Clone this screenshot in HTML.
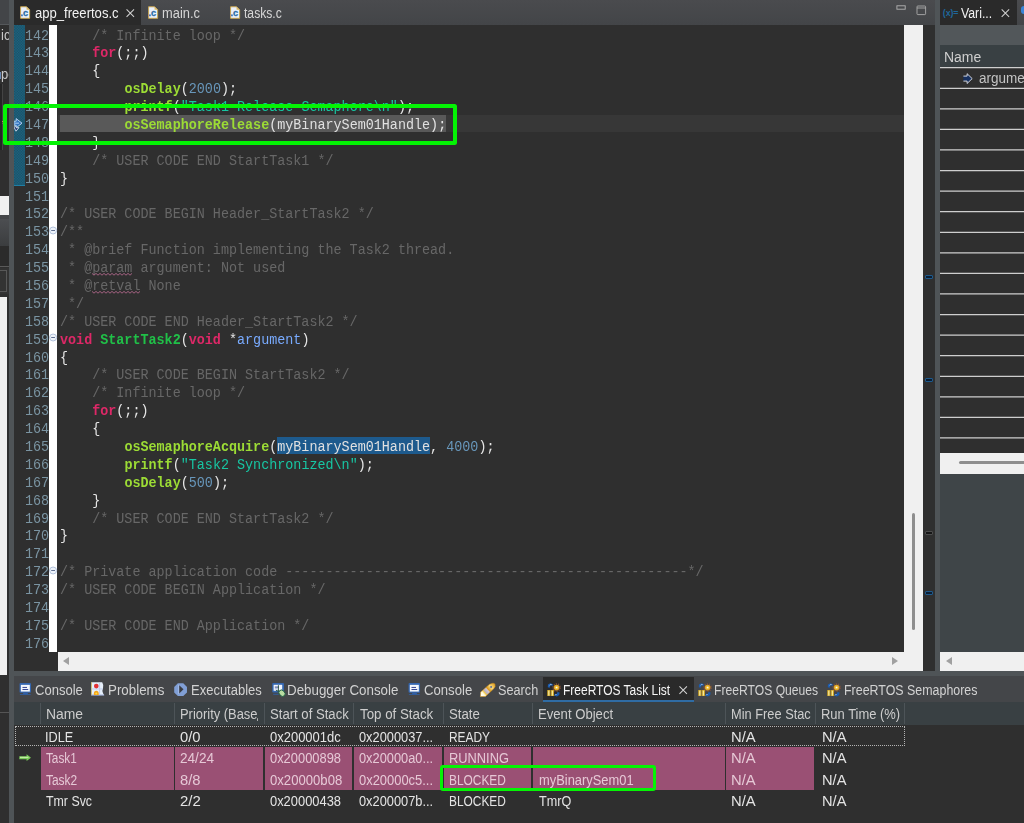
<!DOCTYPE html>
<html><head><meta charset="utf-8"><title>IDE</title>
<style>
html,body{margin:0;padding:0;}
html{width:1024px;height:823px;overflow:hidden;background:#2f2f2f;}
body{width:1024px;height:823px;overflow:hidden;background:#2f2f2f;position:relative;font-family:"Liberation Sans",sans-serif;}
.a{position:absolute;}
svg{position:absolute;overflow:visible;}
/* ---------- editor ---------- */
#edtabs{left:14px;top:0;width:921px;height:24.5px;background:linear-gradient(#4a4b4e,#434548);}
#tabact{left:14px;top:0;width:126.5px;height:24.5px;background:#2a2a2a;}
.u{position:absolute;font-size:14px;line-height:16px;height:16px;white-space:pre;transform-origin:0 0;}
.ln,.no{position:absolute;white-space:pre;font-family:"Liberation Mono",monospace;font-size:13.41px;line-height:17.888px;height:17.888px;transform:scaleY(1.1);transform-origin:0 12.5px;}
.ln{left:60px;color:#d8d8d8;}
.no{left:25px;color:#7a94a2;}
.c{color:#676767;}
.k{color:#dd2867;font-weight:bold;}
.f{color:#9cdc35;font-weight:bold;}
.d{color:#20c048;font-weight:bold;}
.n{color:#6897bb;}
.s{color:#17c6a3;}
.p{color:#79abff;}
.b{color:#e6e6e6;}
.t{color:#e0e0e0;}


/* ---------- scrollbars ---------- */
#vsb{left:904px;top:24.8px;width:19px;height:646px;background:#f0f0f0;}
#hsb{left:58px;top:651.6px;width:865px;height:19px;background:#f0f0f0;}
#ruler{left:923px;top:24.5px;width:11.6px;height:646px;background:#2f2f2f;}
.sash{background:#4f5457;}
.mark{left:924.8px;width:8.2px;height:4.4px;background:#0b1e33;border:1px solid #1f5a8c;box-sizing:border-box;border-radius:1px;}
/* ---------- right panel ---------- */
#rp{left:940px;top:0;width:84px;height:670.5px;background:#2f2f2f;}
#rptabs{left:940px;top:0;width:84px;height:24.5px;background:linear-gradient(#4a4b4e,#434548);}
#rptab{left:940px;top:0;width:76.6px;height:24.5px;background:#2a2a2a;}
#rptool{left:940px;top:24.5px;width:84px;height:20.5px;background:#52575a;}
#rphead{left:940px;top:45px;width:84px;height:22px;background:#394043;}
.rl{left:940px;width:84px;height:1.2px;background:#c4c4c4;}
/* ---------- bottom panel ---------- */
#bp{left:14px;top:676px;width:1010px;height:147px;background:#2f2f2f;}
#bptabs{left:14px;top:676px;width:1010px;height:25.6px;background:#444649;}
#bphead{left:14px;top:701.6px;width:1010px;height:23.2px;background:#394043;}
.vs{top:702.5px;width:1px;height:21.5px;background:#4d5458;}
.pink{background:#9a5074;}
.gbox{border:4px solid #04f404;box-sizing:border-box;border-radius:2.5px;}
.u,.ln,.no{filter:blur(0.3px);}
</style></head><body>
<!-- editor tab bar -->
<div class="a" id="edtabs"></div>
<div class="a" id="tabact"></div>
<svg style="left:20.4px;top:5.9px" width="10.6" height="12.9" viewBox="0 0 11 13"><path d="M0.6 0.6H6.8L10 3.8V12.6H0.6Z" fill="#eaf1fb" stroke="#c9a44e" stroke-width="1"/><path d="M6.8 0.6V3.8H10Z" fill="#dcb964"/><text x="0.4" y="10.6" font-family="Liberation Sans" font-weight="bold" font-size="9.6" fill="#2d6ca6" stroke="#2d6ca6" stroke-width="0.3">.c</text></svg>
<svg style="left:147.6px;top:5.9px" width="10.6" height="12.9" viewBox="0 0 11 13"><path d="M0.6 0.6H6.8L10 3.8V12.6H0.6Z" fill="#eaf1fb" stroke="#c9a44e" stroke-width="1"/><path d="M6.8 0.6V3.8H10Z" fill="#dcb964"/><text x="0.4" y="10.6" font-family="Liberation Sans" font-weight="bold" font-size="9.6" fill="#2d6ca6" stroke="#2d6ca6" stroke-width="0.3">.c</text></svg>
<svg style="left:229.8px;top:5.9px" width="10.6" height="12.9" viewBox="0 0 11 13"><path d="M0.6 0.6H6.8L10 3.8V12.6H0.6Z" fill="#eaf1fb" stroke="#c9a44e" stroke-width="1"/><path d="M6.8 0.6V3.8H10Z" fill="#dcb964"/><text x="0.4" y="10.6" font-family="Liberation Sans" font-weight="bold" font-size="9.6" fill="#2d6ca6" stroke="#2d6ca6" stroke-width="0.3">.c</text></svg>
<svg style="left:125.6px;top:8.6px" width="8.6" height="8.4" viewBox="0 0 9 9"><path d="M0.5 0.5L8.5 8.5M8.5 0.5L0.5 8.5" stroke="#d2d2d2" stroke-width="1.1" fill="none"/></svg>
<!-- min / max -->
<svg style="left:895.5px;top:4.5px" width="10" height="5" viewBox="0 0 10 5"><rect x="0.9" y="0.8" width="8.3" height="3.4" fill="none" stroke="#b4b4b4" stroke-width="0.9"/></svg>
<svg style="left:916px;top:4.5px" width="11" height="11" viewBox="0 0 11 11"><rect x="1" y="1" width="8.6" height="8.6" rx="0.8" fill="none" stroke="#acacac" stroke-width="0.9"/><path d="M1 3H9.6" stroke="#acacac" stroke-width="0.9"/></svg>
<!-- editor -->
<div class="a" id="curline" style="left:58px;top:114.5px;width:846px;height:17.5px;background:#373737"></div>
<div class="a" id="dbgline" style="left:60px;top:114.5px;width:386px;height:17.5px;background:#595959"></div>
<div class="a" id="teal" style="left:14px;top:24.8px;width:11.1px;height:160.6px;background:#1c5a73;background-image:conic-gradient(#1d4c62 25%,#1b6985 0 50%,#1d4c62 0 75%,#1b6985 0);background-size:1.6px 1.6px"></div>
<div class="a" style="left:14px;top:185px;width:11.1px;height:1px;background:#1f7ea4"></div>
<div class="a" id="white1" style="left:48.9px;top:24.8px;width:8.2px;height:627px;background:#ffffff"></div>
<div class="a" style="left:277.3px;top:437px;width:152.8px;height:17.4px;background:#1d5a8d"></div>
<!-- fold markers -->
<svg style="left:48.9px;top:226px" width="8.2" height="9" viewBox="0 0 8.2 9"><circle cx="4.1" cy="4.5" r="3.5" fill="#eef3fa" stroke="#b2c2dc" stroke-width="1"/><path d="M2.2 4.5H6" stroke="#5f6f92" stroke-width="1"/></svg>
<svg style="left:48.9px;top:333.3px" width="8.2" height="9" viewBox="0 0 8.2 9"><circle cx="4.1" cy="4.5" r="3.5" fill="#eef3fa" stroke="#b2c2dc" stroke-width="1"/><path d="M2.2 4.5H6" stroke="#5f6f92" stroke-width="1"/></svg>
<svg style="left:48.9px;top:565.9px" width="8.2" height="9" viewBox="0 0 8.2 9"><circle cx="4.1" cy="4.5" r="3.5" fill="#eef3fa" stroke="#b2c2dc" stroke-width="1"/><path d="M2.2 4.5H6" stroke="#5f6f92" stroke-width="1"/></svg>
<!-- debug arrow -->
<svg style="left:14px;top:117.5px" width="9" height="14" viewBox="0 0 9 14"><path d="M0 3.2H2.2V0.6L8 5.2L2.2 9.8V7.2H0Z" fill="#2f72bd" stroke="#b4d0ee" stroke-width="1"/><path d="M0 9.2L2 13.2L5 9.6L2.4 9.8L1.6 8.2Z" fill="#1b3570" stroke="#e8eef8" stroke-width="0.8"/><path d="M0.4 5.2H5" stroke="#8fb8e6" stroke-width="1.4"/></svg>
<div class="no" style="top:27.60px">142</div>
<div class="no" style="top:45.49px">143</div>
<div class="no" style="top:63.38px">144</div>
<div class="no" style="top:81.26px">145</div>
<div class="no" style="top:99.15px">146</div>
<div class="no" style="top:117.04px">147</div>
<div class="no" style="top:134.93px">148</div>
<div class="no" style="top:152.82px">149</div>
<div class="no" style="top:170.70px">150</div>
<div class="no" style="top:188.59px">151</div>
<div class="no" style="top:206.48px">152</div>
<div class="no" style="top:224.37px">153</div>
<div class="no" style="top:242.26px">154</div>
<div class="no" style="top:260.14px">155</div>
<div class="no" style="top:278.03px">156</div>
<div class="no" style="top:295.92px">157</div>
<div class="no" style="top:313.81px">158</div>
<div class="no" style="top:331.70px">159</div>
<div class="no" style="top:349.58px">160</div>
<div class="no" style="top:367.47px">161</div>
<div class="no" style="top:385.36px">162</div>
<div class="no" style="top:403.25px">163</div>
<div class="no" style="top:421.14px">164</div>
<div class="no" style="top:439.02px">165</div>
<div class="no" style="top:456.91px">166</div>
<div class="no" style="top:474.80px">167</div>
<div class="no" style="top:492.69px">168</div>
<div class="no" style="top:510.58px">169</div>
<div class="no" style="top:528.46px">170</div>
<div class="no" style="top:546.35px">171</div>
<div class="no" style="top:564.24px">172</div>
<div class="no" style="top:582.13px">173</div>
<div class="no" style="top:600.02px">174</div>
<div class="no" style="top:617.90px">175</div>
<div class="no" style="top:635.79px">176</div>
<div class="ln" style="top:27.60px">    <span class="c">/* Infinite loop */</span></div>
<div class="ln" style="top:45.49px">    <span class="k">for</span><span class="b">(;;)</span></div>
<div class="ln" style="top:63.38px">    <span class="b">{</span></div>
<div class="ln" style="top:81.26px">        <span class="f">osDelay</span><span class="b">(</span><span class="n">2000</span><span class="b">);</span></div>
<div class="ln" style="top:99.15px">        <span class="f">printf</span><span class="b">(</span><span class="s">&quot;Task1 Release Semaphore\n&quot;</span><span class="b">);</span></div>
<div class="ln" style="top:117.04px">        <span class="f">osSemaphoreRelease</span><span class="b">(</span><span class="t">myBinarySem01Handle</span><span class="b">);</span></div>
<div class="ln" style="top:134.93px">    <span class="b">}</span></div>
<div class="ln" style="top:152.82px">    <span class="c">/* USER CODE END StartTask1 */</span></div>
<div class="ln" style="top:170.70px"><span class="b">}</span></div>
<div class="ln" style="top:206.48px"><span class="c">/* USER CODE BEGIN Header_StartTask2 */</span></div>
<div class="ln" style="top:224.37px"><span class="c">/**</span></div>
<div class="ln" style="top:242.26px"><span class="c"> * @brief Function implementing the Task2 thread.</span></div>
<div class="ln" style="top:260.14px"><span class="c"> * @</span><span class="c sq">param</span><span class="c"> argument: Not used</span></div>
<div class="ln" style="top:278.03px"><span class="c"> * @</span><span class="c sq">retval</span><span class="c"> None</span></div>
<div class="ln" style="top:295.92px"><span class="c"> */</span></div>
<div class="ln" style="top:313.81px"><span class="c">/* USER CODE END Header_StartTask2 */</span></div>
<div class="ln" style="top:331.70px"><span class="k">void</span> <span class="d">StartTask2</span><span class="b">(</span><span class="k">void</span> <span class="b">*</span><span class="p">argument</span><span class="b">)</span></div>
<div class="ln" style="top:349.58px"><span class="b">{</span></div>
<div class="ln" style="top:367.47px">    <span class="c">/* USER CODE BEGIN StartTask2 */</span></div>
<div class="ln" style="top:385.36px">    <span class="c">/* Infinite loop */</span></div>
<div class="ln" style="top:403.25px">    <span class="k">for</span><span class="b">(;;)</span></div>
<div class="ln" style="top:421.14px">    <span class="b">{</span></div>
<div class="ln" style="top:439.02px">        <span class="f">osSemaphoreAcquire</span><span class="b">(</span><span class="t sel">myBinarySem01Handle</span><span class="b">, </span><span class="n">4000</span><span class="b">);</span></div>
<div class="ln" style="top:456.91px">        <span class="f">printf</span><span class="b">(</span><span class="s">&quot;Task2 Synchronized\n&quot;</span><span class="b">);</span></div>
<div class="ln" style="top:474.80px">        <span class="f">osDelay</span><span class="b">(</span><span class="n">500</span><span class="b">);</span></div>
<div class="ln" style="top:492.69px">    <span class="b">}</span></div>
<div class="ln" style="top:510.58px">    <span class="c">/* USER CODE END StartTask2 */</span></div>
<div class="ln" style="top:528.46px"><span class="b">}</span></div>
<div class="ln" style="top:564.24px"><span class="c">/* Private application code --------------------------------------------------*/</span></div>
<div class="ln" style="top:582.13px"><span class="c">/* USER CODE BEGIN Application */</span></div>
<div class="ln" style="top:617.90px"><span class="c">/* USER CODE END Application */</span></div>
<!-- squiggles -->
<svg style="left:92.1px;top:272.9px" width="40.2" height="2.6"><polyline points="0.0,0.4 2.0,2.2 4.0,0.4 6.0,2.2 8.0,0.4 10.0,2.2 12.0,0.4 14.0,2.2 16.0,0.4 18.0,2.2 20.0,0.4 22.0,2.2 24.0,0.4 26.0,2.2 28.0,0.4 30.0,2.2 32.0,0.4 34.0,2.2 36.0,0.4 38.0,2.2 40.0,0.4" fill="none" stroke="#b0668a" stroke-width="0.9"/></svg>
<svg style="left:92.1px;top:290.8px" width="48.2" height="2.6"><polyline points="0.0,0.4 2.0,2.2 4.0,0.4 6.0,2.2 8.0,0.4 10.0,2.2 12.0,0.4 14.0,2.2 16.0,0.4 18.0,2.2 20.0,0.4 22.0,2.2 24.0,0.4 26.0,2.2 28.0,0.4 30.0,2.2 32.0,0.4 34.0,2.2 36.0,0.4 38.0,2.2 40.0,0.4 42.0,2.2 44.0,0.4 46.0,2.2 48.0,0.4" fill="none" stroke="#b0668a" stroke-width="0.9"/></svg>
<!-- scrollbars / ruler -->
<div class="a" id="hsb"></div>
<div class="a" id="vsb"></div>
<div class="a" id="ruler"></div>
<div class="a mark" style="top:274.7px"></div>
<div class="a mark" style="top:377.5px"></div>
<div class="a mark" style="top:530.6px;background:#161616;border-color:#4c4c4c"></div>
<div class="a mark" style="top:590.6px"></div>
<div class="a" style="left:912.1px;top:512.5px;width:3px;height:117px;background:#8e8e8e;border-radius:1.5px"></div>
<div class="a" style="left:62.5px;top:656.6px;width:0;height:0;border:4.5px solid transparent;border-right:6.5px solid #a0a0a0;border-left:0"></div>
<div class="a" style="left:891.5px;top:656.6px;width:0;height:0;border:4.5px solid transparent;border-left:6.5px solid #a0a0a0;border-right:0"></div>
<!-- left strip -->
<div class="a" style="left:0;top:0;width:9px;height:823px;background:#2f2f2f;overflow:hidden">
<div class="a" style="left:0;top:0;width:9px;height:24px;background:#434548"></div>
<div class="a" style="left:0;top:24px;width:9px;height:1px;background:#55585b"></div>
<div class="u" style="left:0.6px;top:27.4px;color:#c8c8c8;transform:scaleX(.93)">ic</div>
<div class="u" style="left:1px;top:66.2px;color:#c8c8c8;transform:scaleX(.93)">pe</div><div class="a" style="left:0;top:72px;width:1px;height:7px;background:#6a8ab8"></div>
<div class="a" style="left:0;top:84px;width:1.6px;height:66px;background:#262626;border-right:1px solid #444"></div>
<div class="a" style="left:1.5px;top:120.5px;width:5px;height:1px;background:#b8935a"></div>
<div class="a" style="left:3.5px;top:116px;width:1px;height:8px;background:#8a7a5a;transform:skewX(-25deg)"></div>
<div class="a" style="left:0;top:195.7px;width:9px;height:19px;background:#f0f0f0"></div>
<div class="a" style="left:0;top:214.7px;width:9px;height:4px;background:#444648"></div>
<div class="a" style="left:0;top:218.6px;width:9px;height:27.2px;background:linear-gradient(#4c4e51,#3b3d3f)"></div>
<div class="a" style="left:0;top:245.8px;width:9px;height:20.5px;background:#2b2b2b"></div>
<div class="a" style="left:0;top:266.3px;width:9px;height:1.2px;background:#5a5a5a"></div>
<div class="a" style="left:0;top:267.5px;width:9px;height:26px;background:#333"></div>
<div class="a" style="left:-1px;top:270px;width:7.6px;height:22px;border:1px solid #585858;box-sizing:border-box"></div>
<div class="a" style="left:0;top:297.3px;width:7.4px;height:378px;background:#f0f0f0"></div>
<div class="a" style="left:0;top:712px;width:9px;height:1px;background:#555"></div>
</div>
<div class="a sash" style="left:9px;top:0;width:5px;height:823px"></div>
<div class="a sash" style="left:934.6px;top:0;width:5.4px;height:676px"></div>
<div class="a sash" style="left:14px;top:670.5px;width:1010px;height:5.5px"></div>
<!-- right panel -->
<div class="a" id="rp"></div>
<div class="a" id="rptabs"></div>
<div class="a" id="rptab"></div>
<div class="a" style="left:942.8px;top:7.8px;font:bold 8.8px 'Liberation Sans';color:#1f689c;letter-spacing:-0.1px;white-space:pre">(x)=</div>
<svg style="left:1001.2px;top:8.6px" width="8.8" height="8.4" viewBox="0 0 9 9"><path d="M0.5 0.5L8.5 8.5M8.5 0.5L0.5 8.5" stroke="#d2d2d2" stroke-width="1.1" fill="none"/></svg>
<div class="a" style="left:1020.5px;top:6px;width:3.5px;height:8px;border-radius:4px 0 0 4px;background:#3a84d8"></div>
<div class="a" id="rptool"></div>
<div class="a" id="rphead"></div>
<svg style="left:940px;top:0" width="84" height="460" viewBox="0 0 84 460">
<line x1="0" x2="84" y1="67.70" y2="67.70" stroke="#cfcfcf" stroke-width="1.25"/>
<line x1="0" x2="84" y1="88.27" y2="88.27" stroke="#cfcfcf" stroke-width="1.25"/>
<line x1="0" x2="84" y1="108.84" y2="108.84" stroke="#cfcfcf" stroke-width="1.25"/>
<line x1="0" x2="84" y1="129.41" y2="129.41" stroke="#cfcfcf" stroke-width="1.25"/>
<line x1="0" x2="84" y1="149.98" y2="149.98" stroke="#cfcfcf" stroke-width="1.25"/>
<line x1="0" x2="84" y1="170.55" y2="170.55" stroke="#cfcfcf" stroke-width="1.25"/>
<line x1="0" x2="84" y1="191.12" y2="191.12" stroke="#cfcfcf" stroke-width="1.25"/>
<line x1="0" x2="84" y1="211.69" y2="211.69" stroke="#cfcfcf" stroke-width="1.25"/>
<line x1="0" x2="84" y1="232.26" y2="232.26" stroke="#cfcfcf" stroke-width="1.25"/>
<line x1="0" x2="84" y1="252.83" y2="252.83" stroke="#cfcfcf" stroke-width="1.25"/>
<line x1="0" x2="84" y1="273.40" y2="273.40" stroke="#cfcfcf" stroke-width="1.25"/>
<line x1="0" x2="84" y1="293.97" y2="293.97" stroke="#cfcfcf" stroke-width="1.25"/>
<line x1="0" x2="84" y1="314.54" y2="314.54" stroke="#cfcfcf" stroke-width="1.25"/>
<line x1="0" x2="84" y1="335.11" y2="335.11" stroke="#cfcfcf" stroke-width="1.25"/>
<line x1="0" x2="84" y1="355.68" y2="355.68" stroke="#cfcfcf" stroke-width="1.25"/>
<line x1="0" x2="84" y1="376.25" y2="376.25" stroke="#cfcfcf" stroke-width="1.25"/>
<line x1="0" x2="84" y1="396.82" y2="396.82" stroke="#cfcfcf" stroke-width="1.25"/>
<line x1="0" x2="84" y1="417.39" y2="417.39" stroke="#cfcfcf" stroke-width="1.25"/>
<line x1="0" x2="84" y1="437.96" y2="437.96" stroke="#cfcfcf" stroke-width="1.25"/>
</svg>
<svg style="left:962.5px;top:72.5px" width="10" height="11.2" viewBox="0 0 10 11.2"><path d="M0.4 3.1H4.1V0.7L9.2 5.6L4.1 10.5V8.1H0.4Z" fill="#17305f"/><path d="M0.4 3.1H4.1V0.7L9.2 5.6L4.1 10.5V8.1H0.4" fill="none" stroke="#e4e8f0" stroke-width="0.9" stroke-linejoin="miter"/></svg>
<div class="a" style="left:940px;top:452.8px;width:84px;height:21px;background:#f0f0f0"></div>
<div class="a" style="left:958.6px;top:460.6px;width:65.4px;height:3px;background:#8e8e8e;border-radius:1.5px 0 0 1.5px"></div>
<div class="a" style="left:940px;top:473.8px;width:84px;height:178px;background:#3f4548"></div>
<div class="a" style="left:940px;top:651.6px;width:84px;height:19px;background:#f0f0f0"></div>
<div class="a" style="left:945.5px;top:656.6px;width:0;height:0;border:4.5px solid transparent;border-right:6.5px solid #a0a0a0;border-left:0"></div>
<!-- bottom panel -->
<div class="a" id="bp"></div>
<div class="a" id="bptabs"></div>
<div class="a" style="left:542.6px;top:677px;width:151.4px;height:24.6px;background:#2a2a2a"></div>
<div class="a" style="left:542.6px;top:699.7px;width:151.4px;height:2px;background:#2f6ca4"></div>
<div class="a" id="bphead"></div>
<div class="a vs" style="left:40px"></div><div class="a vs" style="left:173.8px"></div><div class="a vs" style="left:263.6px"></div><div class="a vs" style="left:352.8px"></div><div class="a vs" style="left:442.8px"></div><div class="a vs" style="left:532.2px"></div><div class="a vs" style="left:725.2px"></div><div class="a vs" style="left:814.6px"></div><div class="a vs" style="left:904.2px"></div>
<!-- bottom tab icons -->
<svg style="left:19.2px;top:683.1px" width="13" height="12.4" viewBox="0 0 12 12" preserveAspectRatio="none"><rect x="0.5" y="0" width="10.6" height="9.4" rx="1" fill="#3567b0"/><rect x="1.7" y="1.8" width="8.3" height="6.5" fill="#f4f8fd"/><rect x="3.2" y="3.8" width="4.2" height="1" fill="#3a4a94"/><rect x="3.2" y="5.8" width="5.3" height="1" fill="#3a4a94"/><rect x="3.8" y="9.4" width="4.4" height="1.6" fill="#2e60aa"/><rect x="0.8" y="10.7" width="10" height="0.9" fill="#2e60aa" opacity=".8"/></svg>
<svg style="left:408.1px;top:683.1px" width="13" height="12.4" viewBox="0 0 12 12" preserveAspectRatio="none"><rect x="0.5" y="0" width="10.6" height="9.4" rx="1" fill="#3567b0"/><rect x="1.7" y="1.8" width="8.3" height="6.5" fill="#f4f8fd"/><rect x="3.2" y="3.8" width="4.2" height="1" fill="#3a4a94"/><rect x="3.2" y="5.8" width="5.3" height="1" fill="#3a4a94"/><rect x="3.8" y="9.4" width="4.4" height="1.6" fill="#2e60aa"/><rect x="0.8" y="10.7" width="10" height="0.9" fill="#2e60aa" opacity=".8"/></svg>
<svg style="left:90.8px;top:682.3px" width="13.4" height="13.6" viewBox="0 0 13.4 13.6"><path d="M0.3 0.3H11.2Q13.2 3.4 12 6.6Q10.4 9.4 13.2 13.2H0.3Z" fill="#e6effa"/><path d="M0.5 0.3V13.2" stroke="#cdbd74" stroke-width="0.9"/><path d="M0.3 13.1H13.2" stroke="#8fa0cc" stroke-width="0.9"/><path d="M8.6 0.5V13M0.6 7H12" stroke="#bccbea" stroke-width="0.9"/><circle cx="5.3" cy="4.1" r="2.35" fill="#e23236"/><path d="M2.9 13V11.3A2.4 2.6 0 0 1 7.7 11.3V13Z" fill="#f4a41c"/><circle cx="5.3" cy="11.6" r="1" fill="#ffe040"/></svg>
<svg style="left:173.8px;top:682.9px" width="13.2" height="13.3" viewBox="0 0 13.2 13.3"><path d="M3.9 0.2H9.3L13 3.9V9.4L9.3 13.1H3.9L0.2 9.4V3.9Z" fill="#819fd5"/><path d="M5.2 2.2V10.4L9.5 6.3Z" fill="#3a3c42"/><path d="M4.6 1.8V11" stroke="#a8c0ea" stroke-width="0.8"/></svg>
<svg style="left:271.8px;top:683.2px" width="14" height="14" viewBox="0 0 14 14"><rect x="0.2" y="0" width="11.8" height="9.4" rx="1" fill="#3567b0"/><rect x="1.6" y="1.8" width="8.6" height="6" fill="#f0f5fc"/><rect x="2.8" y="3.6" width="4" height="1" fill="#3a4a94"/><rect x="2.8" y="5.4" width="2.8" height="0.9" fill="#8ea4d0"/><rect x="1.2" y="10.8" width="5.4" height="0.9" fill="#2e60aa"/><path d="M6.4 2.2V8M4 7.4L7.4 8.6" stroke="#1c4a38" stroke-width="0.9"/><ellipse cx="10" cy="10.2" rx="2.7" ry="3.5" transform="rotate(-42 10 10.2)" fill="#b9dca2" stroke="#1e5f44" stroke-width="0.9"/></svg>
<svg style="left:479.8px;top:683px" width="15.4" height="14.2" viewBox="0 0 16 15"><defs><linearGradient id="fl" gradientUnits="userSpaceOnUse" x1="0.5" y1="14" x2="15" y2="1"><stop offset="0" stop-color="#ffffff"/><stop offset=".2" stop-color="#fffbe0"/><stop offset=".3" stop-color="#f2c84a"/><stop offset=".36" stop-color="#b9afc0"/><stop offset=".5" stop-color="#cfc6d6"/><stop offset=".56" stop-color="#dd9a1c"/><stop offset=".75" stop-color="#f7d980"/><stop offset="1" stop-color="#e0a024"/></linearGradient></defs><path d="M0.3 14.4L0.6 9.6L10 1.4L13.6 0.2L15.6 1L15.8 3.6L14.6 5.8L5.6 14.2Z" fill="url(#fl)" stroke="#d8961e" stroke-width="0.6"/><circle cx="11.6" cy="4.2" r="0.9" fill="#3a5aa4"/></svg>
<svg style="left:546.8px;top:682.6px" width="13.6" height="13.6" viewBox="0 0 14 14"><rect x="0.2" y="7.2" width="3.3" height="6.2" fill="#c79f26"/><rect x="1.2" y="7.8" width="1.3" height="5.2" fill="#f6e89a"/><rect x="3.9" y="7.2" width="3.3" height="6.2" fill="#c79f26"/><rect x="4.9" y="7.8" width="1.3" height="5.2" fill="#f6e89a"/><circle cx="9.9" cy="4.7" r="3.7" fill="none" stroke="#8a5238" stroke-width="1.4" stroke-dasharray="1.2 1.1"/><circle cx="9.9" cy="4.7" r="2.9" fill="#e2a626"/><circle cx="9.9" cy="4.7" r="1.6" fill="#f4cf52"/><circle cx="9.9" cy="4.7" r="0.8" fill="#fbf6ea"/><path d="M0.8 4.4L1 1.6L3.4 0.2L6.2 1.2L5.4 3L3.6 2.4L2.8 4.8Z" fill="#1b5cb0"/><path d="M13 9.8L12.6 12.4L10.2 13.8L7.4 12.8L8.2 11L9.8 11.6L10.8 9.2Z" fill="#1b5cb0"/><path d="M7.4 12.8L9.6 11.2L10 12.2Z" fill="#cfdcf2"/><path d="M2 2.6L4.2 1L5 1.9Z" fill="#cfdcf2"/></svg>
<svg style="left:697.6px;top:682.6px" width="13.6" height="13.6" viewBox="0 0 14 14"><rect x="0.2" y="7.2" width="3.3" height="6.2" fill="#c79f26"/><rect x="1.2" y="7.8" width="1.3" height="5.2" fill="#f6e89a"/><rect x="3.9" y="7.2" width="3.3" height="6.2" fill="#c79f26"/><rect x="4.9" y="7.8" width="1.3" height="5.2" fill="#f6e89a"/><circle cx="9.9" cy="4.7" r="3.7" fill="none" stroke="#8a5238" stroke-width="1.4" stroke-dasharray="1.2 1.1"/><circle cx="9.9" cy="4.7" r="2.9" fill="#e2a626"/><circle cx="9.9" cy="4.7" r="1.6" fill="#f4cf52"/><circle cx="9.9" cy="4.7" r="0.8" fill="#fbf6ea"/><path d="M0.8 4.4L1 1.6L3.4 0.2L6.2 1.2L5.4 3L3.6 2.4L2.8 4.8Z" fill="#1b5cb0"/><path d="M13 9.8L12.6 12.4L10.2 13.8L7.4 12.8L8.2 11L9.8 11.6L10.8 9.2Z" fill="#1b5cb0"/><path d="M7.4 12.8L9.6 11.2L10 12.2Z" fill="#cfdcf2"/><path d="M2 2.6L4.2 1L5 1.9Z" fill="#cfdcf2"/></svg>
<svg style="left:827.4px;top:682.6px" width="13.6" height="13.6" viewBox="0 0 14 14"><rect x="0.2" y="7.2" width="3.3" height="6.2" fill="#c79f26"/><rect x="1.2" y="7.8" width="1.3" height="5.2" fill="#f6e89a"/><rect x="3.9" y="7.2" width="3.3" height="6.2" fill="#c79f26"/><rect x="4.9" y="7.8" width="1.3" height="5.2" fill="#f6e89a"/><circle cx="9.9" cy="4.7" r="3.7" fill="none" stroke="#8a5238" stroke-width="1.4" stroke-dasharray="1.2 1.1"/><circle cx="9.9" cy="4.7" r="2.9" fill="#e2a626"/><circle cx="9.9" cy="4.7" r="1.6" fill="#f4cf52"/><circle cx="9.9" cy="4.7" r="0.8" fill="#fbf6ea"/><path d="M0.8 4.4L1 1.6L3.4 0.2L6.2 1.2L5.4 3L3.6 2.4L2.8 4.8Z" fill="#1b5cb0"/><path d="M13 9.8L12.6 12.4L10.2 13.8L7.4 12.8L8.2 11L9.8 11.6L10.8 9.2Z" fill="#1b5cb0"/><path d="M7.4 12.8L9.6 11.2L10 12.2Z" fill="#cfdcf2"/><path d="M2 2.6L4.2 1L5 1.9Z" fill="#cfdcf2"/></svg>
<svg style="left:679px;top:686px" width="8.4" height="8.4" viewBox="0 0 9 9"><path d="M0.5 0.5L8.5 8.5M8.5 0.5L0.5 8.5" stroke="#d2d2d2" stroke-width="1.1" fill="none"/></svg>
<!-- rows -->
<div class="a pink" style="left:41px;top:747px;width:132.5px;height:42.8px"></div>
<div class="a pink" style="left:175.25px;top:747px;width:88.0px;height:42.8px"></div>
<div class="a pink" style="left:264.75px;top:747px;width:87.25px;height:42.8px"></div>
<div class="a pink" style="left:354.25px;top:747px;width:87.75px;height:42.8px"></div>
<div class="a pink" style="left:443.75px;top:747px;width:87.0px;height:42.8px"></div>
<div class="a pink" style="left:533.25px;top:747px;width:191.25px;height:42.8px"></div>
<div class="a pink" style="left:726.25px;top:747px;width:87.75px;height:42.8px"></div>
<div class="a" style="left:15px;top:726.2px;width:889.5px;height:20.2px;border:1px dotted #b4b4b4;box-sizing:border-box"></div>
<svg style="left:19px;top:754.2px" width="12.4" height="7.4" viewBox="0 0 12.4 7.4"><path d="M0.3 2.2H7.6V0.3L12 3.7L7.6 7.1V5.2H0.3Z" fill="#7ccc5c"/><path d="M1 3.4H9.4" stroke="#c6f0a8" stroke-width="1.1"/></svg>
<div class="a" style="left:257.3px;top:717.6px;width:1.2px;height:3.4px;background:#b0b0b0;border-radius:0.6px"></div>
<div class="u" style="left:35.03px;top:5.00px;transform:scaleX(0.9341);color:#f2f2f2">app_freertos.c</div>
<div class="u" style="left:162.31px;top:5.00px;transform:scaleX(0.9193);color:#d6d6d6">main.c</div>
<div class="u" style="left:244.48px;top:5.00px;transform:scaleX(0.8674);color:#d6d6d6">tasks.c</div>
<div class="u" style="left:961.00px;top:5.00px;transform:scaleX(0.8759);color:#f2f2f2">Vari...</div>
<div class="u" style="left:943.50px;top:49.00px;transform:scaleX(0.9986);color:#cfcfcf">Name</div>
<div class="u" style="left:979.32px;top:70.00px;transform:scaleX(0.9650);color:#c4c4c4">argume</div>
<div class="u" style="left:35.20px;top:682.00px;transform:scaleX(0.9320);color:#d2d2d2">Console</div>
<div class="u" style="left:108.05px;top:682.00px;transform:scaleX(0.9524);color:#d2d2d2">Problems</div>
<div class="u" style="left:190.57px;top:682.00px;transform:scaleX(0.9284);color:#d2d2d2">Executables</div>
<div class="u" style="left:287.05px;top:682.00px;transform:scaleX(0.9544);color:#d2d2d2">Debugger Console</div>
<div class="u" style="left:424.00px;top:682.00px;transform:scaleX(0.9380);color:#d2d2d2">Console</div>
<div class="u" style="left:497.55px;top:682.00px;transform:scaleX(0.9070);color:#d2d2d2">Search</div>
<div class="u" style="left:563.24px;top:682.00px;transform:scaleX(0.8555);color:#f6f6f6">FreeRTOS Task List</div>
<div class="u" style="left:714.13px;top:682.00px;transform:scaleX(0.8674);color:#d2d2d2">FreeRTOS Queues</div>
<div class="u" style="left:843.81px;top:682.00px;transform:scaleX(0.8872);color:#d2d2d2">FreeRTOS Semaphores</div>
<div class="u" style="left:45.51px;top:706.00px;transform:scaleX(0.9930);color:#cdcdcd">Name</div>
<div class="u" style="left:179.58px;top:706.00px;transform:scaleX(0.9224);color:#cdcdcd">Priority (Base</div>
<div class="u" style="left:270.03px;top:706.00px;transform:scaleX(0.9371);color:#cdcdcd">Start of Stack</div>
<div class="u" style="left:359.76px;top:706.00px;transform:scaleX(0.9511);color:#cdcdcd">Top of Stack</div>
<div class="u" style="left:449.03px;top:706.00px;transform:scaleX(0.9444);color:#cdcdcd">State</div>
<div class="u" style="left:538.31px;top:706.00px;transform:scaleX(0.9367);color:#cdcdcd">Event Object</div>
<div class="u" style="left:731.08px;top:706.00px;transform:scaleX(0.9155);color:#cdcdcd">Min Free Stac</div>
<div class="u" style="left:820.82px;top:706.00px;transform:scaleX(0.9254);color:#cdcdcd">Run Time (%)</div>
<div class="u" style="left:45.37px;top:729.00px;transform:scaleX(0.9068);color:#e4e4e4">IDLE</div>
<div class="u" style="left:180.22px;top:729.00px;transform:scaleX(1.0541);color:#e4e4e4">0/0</div>
<div class="u" style="left:270.04px;top:729.00px;transform:scaleX(0.9272);color:#e4e4e4">0x200001dc</div>
<div class="u" style="left:359.04px;top:729.00px;transform:scaleX(0.9148);color:#e4e4e4">0x2000037...</div>
<div class="u" style="left:448.65px;top:729.00px;transform:scaleX(0.8511);color:#e4e4e4">READY</div>
<div class="u" style="left:730.94px;top:729.00px;transform:scaleX(1.0562);color:#e4e4e4">N/A</div>
<div class="u" style="left:821.96px;top:729.00px;transform:scaleX(1.0449);color:#e4e4e4">N/A</div>
<div class="u" style="left:46.29px;top:750.00px;transform:scaleX(0.8392);color:#e6c8d6">Task1</div>
<div class="u" style="left:180.26px;top:750.00px;transform:scaleX(0.9708);color:#e6c8d6">24/24</div>
<div class="u" style="left:270.04px;top:750.00px;transform:scaleX(0.9211);color:#e6c8d6">0x20000898</div>
<div class="u" style="left:359.04px;top:750.00px;transform:scaleX(0.9148);color:#e6c8d6">0x20000a0...</div>
<div class="u" style="left:448.58px;top:750.00px;transform:scaleX(0.9170);color:#e6c8d6">RUNNING</div>
<div class="u" style="left:730.94px;top:750.00px;transform:scaleX(1.0562);color:#e6c8d6">N/A</div>
<div class="u" style="left:821.96px;top:750.00px;transform:scaleX(1.0449);color:#e4e4e4">N/A</div>
<div class="u" style="left:46.29px;top:772.00px;transform:scaleX(0.8531);color:#e6c8d6">Task2</div>
<div class="u" style="left:180.22px;top:772.00px;transform:scaleX(1.0541);color:#e6c8d6">8/8</div>
<div class="u" style="left:270.03px;top:772.00px;transform:scaleX(0.9375);color:#e6c8d6">0x20000b08</div>
<div class="u" style="left:359.04px;top:772.00px;transform:scaleX(0.9236);color:#e6c8d6">0x20000c5...</div>
<div class="u" style="left:448.65px;top:772.00px;transform:scaleX(0.8506);color:#e6c8d6">BLOCKED</div>
<div class="u" style="left:538.56px;top:772.00px;transform:scaleX(0.9210);color:#e6c8d6">myBinarySem01</div>
<div class="u" style="left:730.94px;top:772.00px;transform:scaleX(1.0562);color:#e6c8d6">N/A</div>
<div class="u" style="left:821.96px;top:772.00px;transform:scaleX(1.0449);color:#e4e4e4">N/A</div>
<div class="u" style="left:46.28px;top:793.00px;transform:scaleX(0.8835);color:#e4e4e4">Tmr Svc</div>
<div class="u" style="left:180.22px;top:793.00px;transform:scaleX(1.0685);color:#e4e4e4">2/2</div>
<div class="u" style="left:270.04px;top:793.00px;transform:scaleX(0.9211);color:#e4e4e4">0x20000438</div>
<div class="u" style="left:359.04px;top:793.00px;transform:scaleX(0.9148);color:#e4e4e4">0x200007b...</div>
<div class="u" style="left:448.65px;top:793.00px;transform:scaleX(0.8506);color:#e4e4e4">BLOCKED</div>
<div class="u" style="left:539.02px;top:793.00px;transform:scaleX(0.9000);color:#e4e4e4">TmrQ</div>
<div class="u" style="left:730.94px;top:793.00px;transform:scaleX(1.0562);color:#e4e4e4">N/A</div>
<div class="u" style="left:821.96px;top:793.00px;transform:scaleX(1.0449);color:#e4e4e4">N/A</div>
<!-- green annotation boxes -->
<div class="a gbox" style="left:3.1px;top:103.7px;width:454.3px;height:41.4px"></div>
<div class="a gbox" style="left:439.6px;top:765.4px;width:216.6px;height:26px;border-width:3.9px;border-radius:3px"></div>
</body></html>
